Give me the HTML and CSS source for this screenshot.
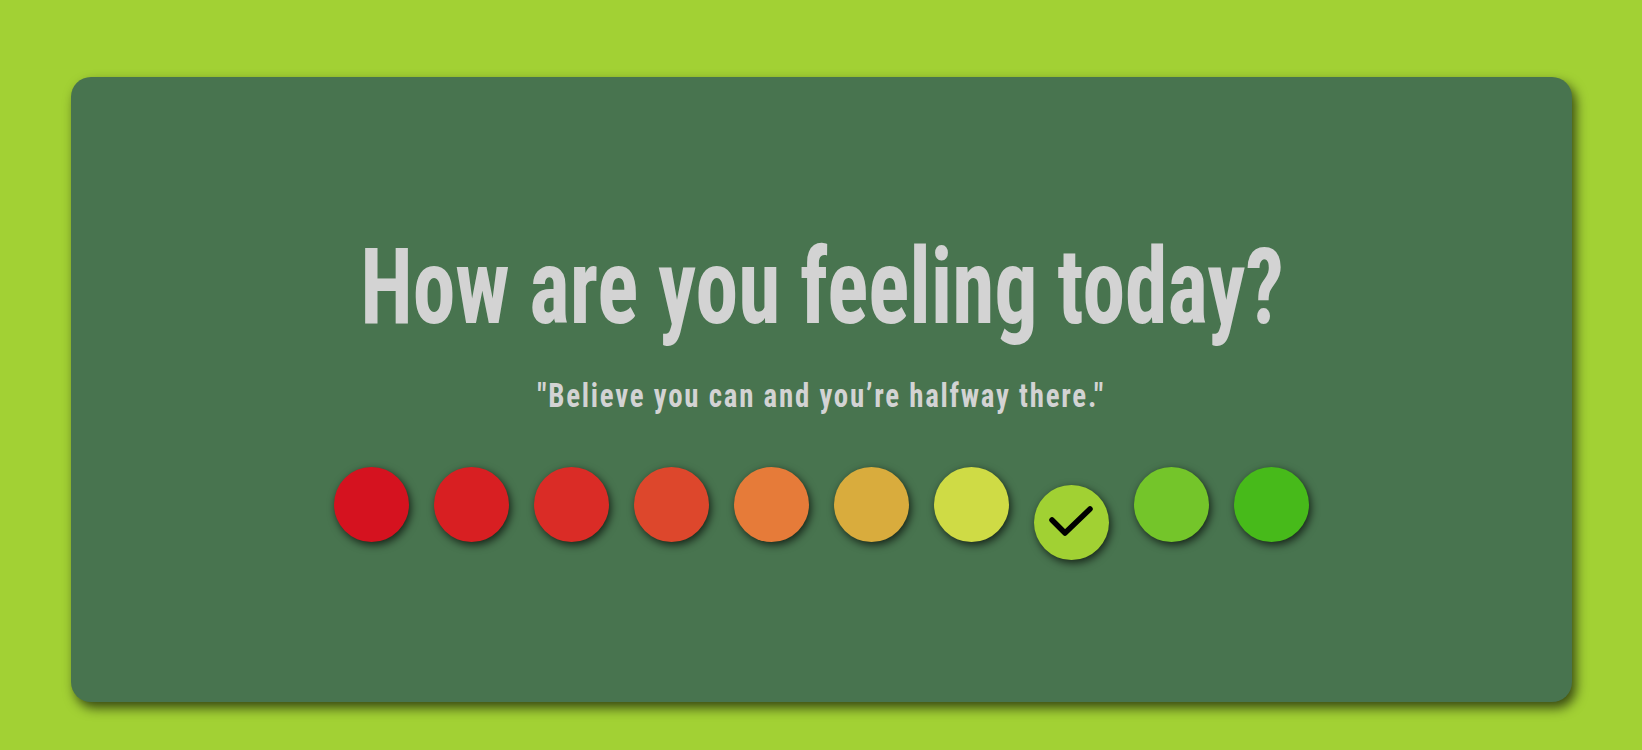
FILE: index.html
```html
<!DOCTYPE html>
<html lang="en">
<head>
<meta charset="utf-8">
<title>Mood</title>
<link rel="stylesheet" href="styles.css">
</head>
<body>
<main class="card">
  <h1 class="title">How are you feeling today?</h1>
  <p class="quote">"Believe you can and you’re halfway there."</p>
  <div class="moods">
    <button class="mood m1" aria-label="1"></button>
    <button class="mood m2" aria-label="2"></button>
    <button class="mood m3" aria-label="3"></button>
    <button class="mood m4" aria-label="4"></button>
    <button class="mood m5" aria-label="5"></button>
    <button class="mood m6" aria-label="6"></button>
    <button class="mood m7" aria-label="7"></button>
    <button class="mood m8 selected" aria-label="8">
      <svg class="check" viewBox="0 0 75 75" width="75" height="75"><path d="M18 35 L31 48 L56 24" fill="none" stroke="#000" stroke-width="5.5" stroke-linecap="round" stroke-linejoin="round"/></svg>
    </button>
    <button class="mood m9" aria-label="9"></button>
    <button class="mood m10" aria-label="10"></button>
  </div>
</main>
</body>
</html>
```
FILE: styles.css
```css
html, body {
  margin: 0;
  padding: 0;
}
body {
  background: #a2d134;
  height: 750px;
  padding-top: 77px;
  box-sizing: border-box;
  font-family: "Roboto", "Liberation Sans", sans-serif;
  font-stretch: 75%;
  font-weight: 700;
  color: #d3d3d3;
}
.card {
  width: 1501px;
  height: 625px;
  margin: 0 0 0 71px;
  box-sizing: border-box;
  background: #48744f;
  border-radius: 20px;
  box-shadow: 4px 6px 12px rgba(0, 0, 0, 0.65);
  display: flex;
  flex-direction: column;
  align-items: center;
  padding-top: 158px;
}
.title {
  margin: 0;
  font-size: 105px;
  line-height: 105px;
  font-weight: 700;
  white-space: nowrap;
  transform: scaleX(0.816);
}
.quote {
  margin: 36px 0 0;
  font-size: 33px;
  line-height: 40px;
  letter-spacing: 2px;
  white-space: nowrap;
  transform: scaleX(0.876);
}
.moods {
  margin-top: 51px;
  display: flex;
  align-items: flex-start;
  gap: 25px;
}
.mood {
  width: 75px;
  height: 75px;
  border: none;
  padding: 0;
  border-radius: 50%;
  box-shadow: 2px 3px 8px rgba(0, 0, 0, 0.7);
  display: block;
}
.selected {
  transform: translateY(18px);
}
.check {
  display: block;
}
.m1 { background: #d5121f; }
.m2 { background: #d81f22; }
.m3 { background: #da2c26; }
.m4 { background: #dd472c; }
.m5 { background: #e67b39; }
.m6 { background: #d9ac3d; }
.m7 { background: #cfdb45; }
.m8 { background: #a1d133; }
.m9 { background: #74c52a; }
.m10 { background: #47ba1a; }
```
